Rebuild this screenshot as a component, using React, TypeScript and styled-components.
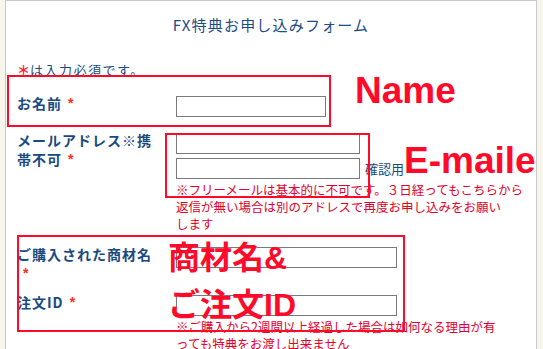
import styled, { createGlobalStyle } from "styled-components";

const GlobalStyle = createGlobalStyle`
  html, body {
    margin: 0;
    padding: 0;
  }
  body {
    background: #f7f5ec;
    font-family: "Noto Sans CJK JP", "Liberation Sans", sans-serif;
    overflow: hidden;
  }
`;

const Page = styled.div`
  position: relative;
  width: 543px;
  height: 349px;
  padding-left: 5px;
  box-sizing: border-box;
  overflow: hidden;
`;

const Panel = styled.main`
  width: 532px;
  min-height: 360px;
  box-sizing: border-box;
  background: #ffffff;
  border: 1px solid #c9c9c9;
  border-bottom: none;
`;

const Title = styled.h1`
  margin: 0;
  padding-top: 14px;
  text-align: center;
  font-size: 15px;
  font-weight: normal;
  line-height: 20px;
  letter-spacing: 1.2px;
  color: #1b4c84;
`;

const Form = styled.form`
  padding-left: 11px;
  color: #1a4a7e;
`;

const Required = styled.p`
  margin: 26px 0 0;
  font-size: 13px;
  line-height: 18px;
  letter-spacing: 1.5px;
`;

const Star = styled.span`
  color: #ff1a2e;
  font-weight: bold;
  letter-spacing: 0;
`;

const Row = styled.div<{ $gap: number }>`
  display: grid;
  grid-template-columns: 159px 1fr;
  align-items: start;
  margin-top: ${(p) => p.$gap}px;
`;

const Label = styled.label`
  font-size: 14px;
  font-weight: bold;
  line-height: 19px;
  letter-spacing: 1px;
`;

const Req = styled.span`
  display: inline-block;
  margin-left: 6px;
  font-family: "Liberation Sans", sans-serif;
  font-size: 14px;
  font-weight: bold;
  color: #ff2a10;
  vertical-align: top;
`;

const Field = styled.div`
  display: flex;
  flex-direction: column;
  align-items: flex-start;
  gap: 4px;
  padding-top: 2px;
`;

const InputLine = styled.div`
  display: flex;
  align-items: center;
  gap: 5px;
`;

const TextInput = styled.input<{ $w: number }>`
  width: ${(p) => p.$w}px;
  height: 21px;
  box-sizing: border-box;
  margin: 0;
  border: 1px solid #7a7a7a;
  background: #ffffff;
`;

const Hint = styled.span`
  font-size: 13px;
  line-height: 17px;
  color: #1a4a7e;
`;

const Note = styled.p`
  margin: -2px 0 0;
  font-size: 12.5px;
  line-height: 17px;
  color: #e3002d;
  white-space: nowrap;
`;

const Mark = styled.div<{ $x: number; $y: number; $w: number; $h: number }>`
  position: absolute;
  left: ${(p) => p.$x}px;
  top: ${(p) => p.$y}px;
  width: ${(p) => p.$w}px;
  height: ${(p) => p.$h}px;
  box-sizing: border-box;
  border: 2px solid #ff0a2a;
  pointer-events: none;
`;

const Callout = styled.div<{ $x: number; $y: number; $size: number }>`
  position: absolute;
  left: ${(p) => p.$x}px;
  top: ${(p) => p.$y}px;
  font-family: "Liberation Sans", "Noto Sans CJK JP", sans-serif;
  font-size: ${(p) => p.$size}px;
  font-weight: bold;
  line-height: 1;
  color: #ff0a2a;
  white-space: nowrap;
  pointer-events: none;
`;

export default function App() {
  return (
    <Page>
      <GlobalStyle />
      <Panel>
        <Title>FX特典お申し込みフォーム</Title>
        <Form>
          <Required>
            <Star>＊</Star>は入力必須です。
          </Required>

          <Row $gap={15}>
            <Label>
              お名前<Req>*</Req>
            </Label>
            <Field>
              <TextInput $w={150} />
            </Field>
          </Row>

          <Row $gap={14}>
            <Label>
              メールアドレス※携<br />帯不可<Req>*</Req>
            </Label>
            <Field>
              <TextInput $w={184} />
              <InputLine>
                <TextInput $w={184} />
                <Hint>確認用</Hint>
              </InputLine>
              <Note>
                ※フリーメールは基本的に不可です。３日経ってもこちらから
                <br />
                返信が無い場合は別のアドレスで再度お申し込みをお願い
                <br />
                します
              </Note>
            </Field>
          </Row>

          <Row $gap={13}>
            <Label>
              ご購入された商材名
              <br />
              <Req>*</Req>
            </Label>
            <Field>
              <TextInput $w={221} />
            </Field>
          </Row>

          <Row $gap={10}>
            <Label>
              注文ID<Req>*</Req>
            </Label>
            <Field>
              <TextInput $w={221} />
              <Note>
                ※ご購入から2週間以上経過した場合は如何なる理由が有
                <br />
                っても特典をお渡し出来ません
              </Note>
            </Field>
          </Row>
        </Form>
      </Panel>

      <Mark $x={7} $y={75} $w={324} $h={52} />
      <Mark $x={165} $y={133} $w={205} $h={65} />
      <Mark $x={17} $y={235} $w={388} $h={97} />

      <Callout $x={355} $y={72} $size={37}>Name</Callout>
      <Callout $x={404} $y={142} $size={37}>E-maile</Callout>
      <Callout $x={168} $y={242} $size={32}>商材名&amp;</Callout>
      <Callout $x={168} $y={289} $size={32}>ご注文ID</Callout>
    </Page>
  );
}
